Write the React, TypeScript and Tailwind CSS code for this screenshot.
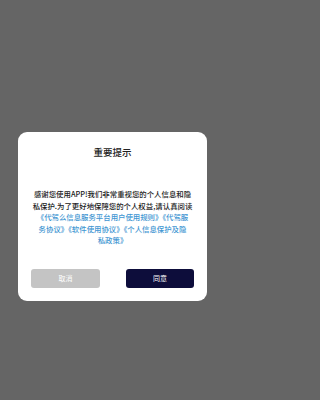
export default function App() {
  return (
    <div className="min-h-screen w-full bg-[#656565]">
      <div
        className="h-[400px] w-[225px] px-[18px] pt-[132px]"
        style={{ fontFamily: '"Noto Sans CJK SC", "Noto Sans", sans-serif' }}
      >
        <div className="flex h-[169px] flex-col rounded-[9px] bg-white px-[13px]">
          <div className="mt-[14px] text-center text-[9.5px] leading-[12px] font-medium text-[#222]">
            重要提示
          </div>

          <div className="mt-[30px] text-center text-[7.4px] leading-[11.6px] font-medium whitespace-nowrap">
            <div className="text-[#1a1a1a]">感谢您使用APP!我们非常重视您的个人信息和隐</div>
            <div className="text-[#1a1a1a]">私保护.为了更好地保障您的个人权益,请认真阅读</div>
            <div className="text-[#3f96d2]">《代驾么信息服务平台用户使用规则》《代驾服</div>
            <div className="text-[#3f96d2]">务协议》《软件使用协议》《个人信息保护及隐</div>
            <div className="text-[#3f96d2]">私政策》</div>
          </div>

          <div className="mt-auto mb-[13px] flex justify-between">
            <button className="h-[19px] w-[69px] rounded-[3px] bg-[#c4c4c4] text-[7px] text-white">
              取消
            </button>
            <button className="h-[19px] w-[68px] rounded-[3px] bg-[#0d0d3b] text-[7px] text-white">
              同意
            </button>
          </div>
        </div>
      </div>
    </div>
  );
}
